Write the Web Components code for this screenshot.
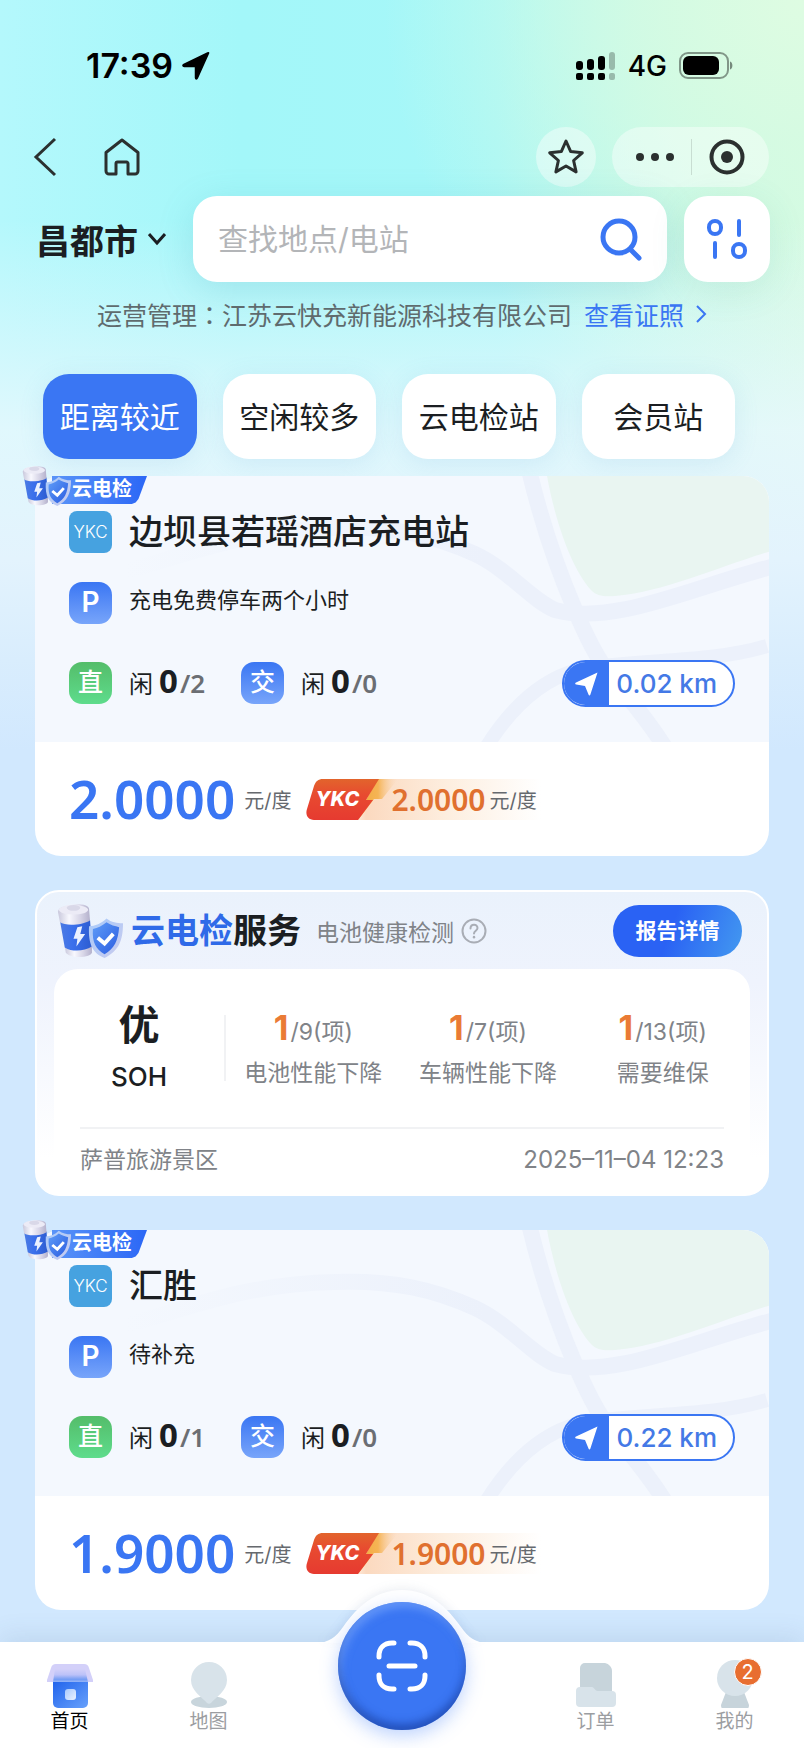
<!DOCTYPE html>
<html lang="zh-CN">
<head>
<meta charset="utf-8">
<meta name="viewport" content="width=device-width, initial-scale=1">
<title>云快充</title>
<style>
    * {
        box-sizing: border-box;
    }
    body {
        margin: 0;
        min-height: 100vh;
        display: flex;
        flex-direction: column;
        font-family: "Inter", "Noto Sans CJK SC", sans-serif;
        color: #1b1e22;
        --blue: #3a76f3;
        --orange: #e0702f;
        background-color: #d1e8fe;
        background-image:
            linear-gradient(180deg, rgba(226, 244, 253, 0) 220px, rgba(232, 248, 253, 0.85) 430px, #e3f3fd 560px, #d9edfd 660px, #d1e8fe 750px),
            radial-gradient(circle at 100% 0, rgba(222, 252, 226, 1) 0, rgba(214, 251, 226, 0.9) 140px, rgba(205, 250, 228, 0) 420px),
            linear-gradient(90deg, #b4f8fc 0, #a3f7f9 30%, #a6f7f8 62%, #d2fae2 100%);
        background-size: 100% 760px;
        background-repeat: no-repeat;
    }
    header {
        display: flex;
        flex-direction: column;
    }
    main {
        flex: 1;
        display: flex;
        flex-direction: column;
        gap: 34px;
        padding: 0 35px 32px;
    }
    tab-bar {
        position: sticky;
        bottom: 0;
    }
</style>
</head>
<body>
<header>
    <status-bar time="17:39" network="4G"></status-bar>
    <nav-bar></nav-bar>
    <search-bar city="昌都市" placeholder="查找地点/电站"></search-bar>
    <operator-line><span slot="label">运营管理</span>江苏云快充新能源科技有限公司<span slot="link">查看证照</span></operator-line>
    <filter-tabs items="距离较近,空闲较多,云电检站,会员站"></filter-tabs>
</header>
<main>
    <station-card distance="0.02 km" dc-free="0" dc-total="2" ac-free="0" ac-total="0" price="2.0000" member-price="2.0000">
        边坝县若瑶酒店充电站
        <span slot="parking">充电免费停车两个小时</span>
    </station-card>
    <check-report grade="优" place="萨普旅游景区" time="2025–11–04 12:23">
        <check-item slot="items" count="1" total="9">电池性能下降</check-item>
        <check-item slot="items" count="1" total="7">车辆性能下降</check-item>
        <check-item slot="items" count="1" total="13">需要维保</check-item>
    </check-report>
    <station-card distance="0.22 km" dc-free="0" dc-total="1" ac-free="0" ac-total="0" price="1.9000" member-price="1.9000">
        汇胜
        <span slot="parking">待补充</span>
    </station-card>
</main>
<tab-bar></tab-bar>

<script>
const reset = `
    *, *::before, *::after { box-sizing: border-box; }
    button { all: unset; box-sizing: border-box; cursor: pointer; }
    a { color: inherit; text-decoration: none; }
    svg { display: block; }
    h2, p { margin: 0; }
`;

class StatusBar extends HTMLElement {
    constructor() {
        super();
        this.attachShadow({ mode: "open" });
        this.shadowRoot.innerHTML = `
            <style>
                ${reset}
                :host {
                    display: flex;
                    justify-content: space-between;
                    align-items: center;
                    height: 127px;
                    padding: 4px 70px 0 86px;
                    color: #000;
                }
                div {
                    display: flex;
                    align-items: center;
                    gap: 9px;
                }
                .time {
                    font-size: 34px;
                    font-weight: 600;
                }
                .net {
                    font-size: 28px;
                    font-weight: 500;
                    margin: 0 3px;
                }
            </style>
            <div>
                <span class="time">${this.getAttribute("time")}</span>
                <svg width="28" height="28" viewBox="0 0 28 28"><path d="M26.500 1.200 15.400 26c-.6 1.400-1.900 1.100-1.900-.3V15.200c0-.5-.3-.8-.8-.8H2.200c-1.500 0-1.700-1.300-.4-1.900L25.600 1c.7-.3 1.200-.3.9.2z" stroke="#000" stroke-width="1.500" stroke-linejoin="round"/></svg>
            </div>
            <div>
                <svg width="40" height="30" viewBox="0 0 40 30">
                    <g>
                        <rect x="0" y="10" width="7" height="9" rx="3"/>
                        <rect x="11" y="8" width="7" height="11" rx="3"/>
                        <rect x="22" y="5" width="7" height="14" rx="3"/>
                        <rect x="0" y="22" width="7" height="7" rx="2"/>
                        <rect x="11" y="22" width="7" height="7" rx="2"/>
                        <rect x="22" y="22" width="7" height="7" rx="2"/>
                    </g>
                    <g opacity=".25">
                        <rect x="33" y="1" width="6" height="18" rx="3"/>
                        <rect x="33" y="22" width="6" height="7" rx="2"/>
                    </g>
                </svg>
                <span class="net">${this.getAttribute("network")}</span>
                <svg width="55" height="27" viewBox="0 0 55 27">
                    <rect x="1" y="1" width="48" height="25" rx="8" fill="none" stroke="#000" stroke-opacity=".4" stroke-width="2"/>
                    <rect x="4" y="4" width="36" height="19" rx="6"/>
                    <path d="M51 9.500c3.200 1 3.200 7 0 8z" fill-opacity=".45"/>
                </svg>
            </div>
        `;
    }
}

class NavBar extends HTMLElement {
    constructor() {
        super();
        this.attachShadow({ mode: "open" });
        this.shadowRoot.innerHTML = `
            <style>
                ${reset}
                :host {
                    display: flex;
                    justify-content: space-between;
                    align-items: center;
                    height: 60px;
                    padding: 0 35px 0 33px;
                }
                div, button {
                    display: flex;
                    align-items: center;
                }
                .left {
                    gap: 46px;
                }
                .right {
                    gap: 16px;
                }
                .star, .capsule {
                    height: 60px;
                    border-radius: 30px;
                    background: rgba(255, 255, 255, 0.42);
                }
                .star {
                    width: 60px;
                    justify-content: center;
                }
                .capsule {
                    padding: 0 24px;
                    gap: 17px;
                }
                i {
                    width: 1px;
                    height: 36px;
                    background: rgba(0, 0, 0, 0.12);
                }
            </style>
            <div class="left">
                <button aria-label="返回"><svg width="24" height="40" viewBox="0 0 24 40" fill="none" stroke="#2b302f" stroke-width="3"><path d="M22 2 3 20l19 18"/></svg></button>
                <button aria-label="首页"><svg width="38" height="38" viewBox="0 0 38 38" fill="none" stroke="#2b302f" stroke-width="3" stroke-linejoin="round"><path d="M3 14.500 19 2l16 12.500V33a3 3 0 0 1-3 3h-7V25.500a1.500 1.500 0 0 0-1.500-1.500h-9a1.500 1.500 0 0 0-1.500 1.500V36H6a3 3 0 0 1-3-3z"/></svg></button>
            </div>
            <div class="right">
                <button class="star" aria-label="收藏"><svg width="38" height="38" viewBox="0 0 38 38" fill="none" stroke="#2b302f" stroke-width="3" stroke-linejoin="round"><path d="m19 3 4.700 10.600 11.600 1.200-8.700 7.700 2.500 11.400L19 28l-10.100 5.900 2.500-11.400-8.700-7.700 11.600-1.200z"/></svg></button>
                <div class="capsule">
                    <button aria-label="更多"><svg width="38" height="36" viewBox="0 0 38 36" fill="#2b302f"><circle cx="4" cy="18" r="4"/><circle cx="19" cy="18" r="4"/><circle cx="34" cy="18" r="4"/></svg></button>
                    <i></i>
                    <button aria-label="关闭"><svg width="36" height="36" viewBox="0 0 36 36"><circle cx="18" cy="18" r="15.500" fill="none" stroke="#2b302f" stroke-width="4"/><circle cx="18" cy="18" r="6" fill="#2b302f"/></svg></button>
                </div>
            </div>
        `;
    }
}

class SearchBar extends HTMLElement {
    constructor() {
        super();
        this.attachShadow({ mode: "open" });
        this.shadowRoot.innerHTML = `
            <style>
                ${reset}
                :host {
                    display: flex;
                    align-items: center;
                    padding: 9px 34px 0 36px;
                }
                .city {
                    flex: none;
                    display: flex;
                    align-items: center;
                    gap: 10px;
                    width: 157px;
                    font-size: 34px;
                    font-weight: 700;
                    white-space: nowrap;
                }
                form {
                    flex: 1;
                    min-width: 0;
                    display: flex;
                    align-items: center;
                    height: 86px;
                    margin-right: 17px;
                    padding: 0 24px 0 25px;
                    border-radius: 24px;
                    background: #fff;
                    box-shadow: 0 8px 36px rgba(60, 150, 170, 0.18);
                }
                input {
                    flex: 1;
                    min-width: 0;
                    border: 0;
                    padding: 0;
                    outline: 0;
                    background: none;
                    font: 30px "Inter", "Noto Sans CJK SC", sans-serif;
                }
                input::placeholder {
                    color: #b3b5b8;
                }
                .filter {
                    flex: none;
                    display: grid;
                    place-items: center;
                    width: 86px;
                    height: 86px;
                    border-radius: 24px;
                    background: #fff;
                    box-shadow: 0 8px 36px rgba(60, 150, 130, 0.12);
                }
            </style>
            <button class="city">${this.getAttribute("city")}<svg width="18" height="14" viewBox="0 0 18 14" fill="none" stroke="#1b1e22" stroke-width="3"><path d="m1 2 8 9 8-9"/></svg></button>
            <form>
                <input type="text" aria-label="搜索" placeholder="${this.getAttribute("placeholder")}">
                <button type="button" aria-label="搜索"><svg width="44" height="44" viewBox="0 0 44 44" fill="none" stroke="#3a76f3" stroke-width="5" stroke-linecap="round"><circle cx="20" cy="20" r="16"/><path d="m32 33 8 8"/></svg></button>
            </form>
            <button class="filter" aria-label="筛选"><svg width="42" height="42" viewBox="0 0 42 42" fill="none" stroke="#3a76f3" stroke-width="4" stroke-linecap="round">
                <rect x="3" y="3" width="12" height="13" rx="6"/>
                <path d="M33 3v14"/>
                <path d="M9 25v14"/>
                <rect x="27" y="26" width="12" height="13" rx="6"/>
            </svg></button>
        `;
    }
}

class OperatorLine extends HTMLElement {
    constructor() {
        super();
        this.attachShadow({ mode: "open" });
        this.shadowRoot.innerHTML = `
            <style>
                ${reset}
                :host {
                    display: flex;
                    justify-content: center;
                    align-items: center;
                    height: 64px;
                    font-size: 25px;
                    color: #5f6b6e;
                    white-space: nowrap;
                }
                .colon {
                    font-family: "Noto Sans CJK TC", sans-serif;
                }
                a {
                    display: flex;
                    align-items: center;
                    gap: 12px;
                    margin-left: 12px;
                    color: var(--blue);
                }
            </style>
            <span><slot name="label"></slot><span class="colon" lang="zh-TW">：</span><slot></slot></span>
            <a href="#license"><slot name="link"></slot><svg width="11" height="18" viewBox="0 0 11 18" fill="none" stroke="#3a76f3" stroke-width="2"><path d="m1 1 8 8-8 8"/></svg></a>
        `;
    }
}

class FilterTabs extends HTMLElement {
    constructor() {
        super();
        this.attachShadow({ mode: "open" });
        const items = this.getAttribute("items").split(",");
        this.shadowRoot.innerHTML = `
            <style>
                ${reset}
                :host {
                    display: grid;
                    grid-template-columns: repeat(4, 1fr);
                    gap: 26px;
                    padding: 28px 69px 17px 43px;
                }
                button {
                    height: 85px;
                    border-radius: 26px;
                    background: #fff;
                    font-size: 30px;
                    line-height: 82px;
                    text-align: center;
                    box-shadow: 0 4px 24px rgba(90, 160, 210, 0.14);
                }
                button[aria-pressed="true"] {
                    background: var(--blue);
                    color: #fff;
                }
            </style>
            ${items.map((item, i) => `<button aria-pressed="${i === 0}">${item}</button>`).join("")}
        `;
    }
}

/* battery with a shield in front of it */
class CheckMascot extends HTMLElement {
    constructor() {
        super();
        this.attachShadow({ mode: "open" });
        this.shadowRoot.innerHTML = `
            <style>
                :host { display: block; }
                svg { display: block; width: 100%; height: 100%; }
            </style>
            <svg viewBox="0 0 68 56" preserveAspectRatio="none">
                <defs>
                    <linearGradient id="metal"><stop offset="0" stop-color="#c9c8dc"/><stop offset=".35" stop-color="#f8f8fe"/><stop offset=".7" stop-color="#d6d4e6"/><stop offset="1" stop-color="#b4b1cc"/></linearGradient>
                    <linearGradient id="cell"><stop offset="0" stop-color="#4c7be2"/><stop offset=".4" stop-color="#3b70ec"/><stop offset="1" stop-color="#2c5cd0"/></linearGradient>
                    <linearGradient id="shield" x2="1" y2="1"><stop offset="0" stop-color="#5f9df8"/><stop offset="1" stop-color="#2a5be0"/></linearGradient>
                    <linearGradient id="rim" x2="1" y2="1"><stop offset="0" stop-color="#a9cbfa"/><stop offset="1" stop-color="#c9cbee"/></linearGradient>
                </defs>
                <path d="M8 44h28v6c0 6-24 7-27 0z" fill="url(#metal)"/>
                <path d="M3 17c10 5 23 4 31-1l2 28c-8 5-20 6-28 1z" fill="url(#cell)"/>
                <path d="M1 8c0-8 31-11 32-3l1 12C26 22 9 23 3 19z" fill="url(#metal)"/>
                <ellipse cx="17" cy="6" rx="15" ry="5" fill="#ecebf6"/>
                <ellipse cx="17" cy="4" rx="7" ry="3" fill="#d9d8e8"/>
                <path d="m21 24-4 12h4l-1 8 9-13h-5l2-8z" fill="#eaf1ff"/>
                <path d="M51 15c5 4 11 5 17 5 0 19-5 29-19 36-12-5-17-14-16-33 6 0 13-3 18-8z" fill="url(#rim)"/>
                <path d="M51 19c4 3 9 4 13 5-1 14-5 22-15 28-9-5-13-12-12-26 5-1 9-3 14-7z" fill="url(#shield)"/>
                <path d="m42 35 7 6 9-10" fill="none" stroke="#fff" stroke-width="4"/>
            </svg>
        `;
    }
}

class StationCard extends HTMLElement {
    constructor() {
        super();
        this.attachShadow({ mode: "open" });
        const attr = (name) => this.getAttribute(name);
        this.shadowRoot.innerHTML = `
            <style>
                ${reset}
                :host {
                    display: block;
                    position: relative;
                    border-radius: 26px;
                    background: #fff;
                }
                .badge {
                    position: absolute;
                    left: -13px;
                    top: -10px;
                    display: flex;
                    z-index: 1;
                }
                .badge check-mascot {
                    position: absolute;
                    left: 0;
                    top: 0;
                    width: 49px;
                    height: 40px;
                }
                .badge span {
                    margin: 10px 0 0 30px;
                    padding: 0 15px 0 20px;
                    height: 28px;
                    line-height: 27px;
                    font-size: 20px;
                    font-weight: 700;
                    color: #fff;
                    background: linear-gradient(90deg, #5a94f8, #2b67f6);
                    clip-path: polygon(0 0, 100% 0, 91% 82%, 88% 95%, 84% 100%, 0 100%);
                }
                .info {
                    position: relative;
                    overflow: hidden;
                    border-radius: 26px 26px 0 0;
                    padding: 35px 34px 38px;
                    background: #f4f8fe;
                }
                .map {
                    position: absolute;
                    inset: 0;
                    width: 100%;
                    height: 100%;
                }
                .row {
                    position: relative;
                    display: flex;
                    align-items: center;
                    height: 42px;
                }
                .parking {
                    align-items: flex-start;
                    margin: 29px 0 38px;
                    font-size: 22px;
                    line-height: 36px;
                }
                .icon {
                    flex: none;
                    width: 43px;
                    height: 42px;
                    margin-right: 17px;
                    border-radius: 13px;
                    line-height: 41px;
                    text-align: center;
                    font-size: 25px;
                    font-weight: 500;
                    color: #fff;
                    background: linear-gradient(#3a76f3, #78a5fa);
                }
                .logo {
                    border-radius: 8px;
                    background: #46a2e0;
                    font: 300 17px/42px "Inter", sans-serif;
                }
                .p {
                    font-size: 28px;
                    font-weight: 600;
                }
                .dc {
                    background: linear-gradient(#54bd6a, #5edc8c);
                }
                h2 {
                    font-size: 34px;
                    font-weight: 500;
                    line-height: 42px;
                }
                .spare {
                    display: flex;
                    align-items: center;
                    width: 172px;
                    font-size: 24px;
                }
                .spare p {
                    display: flex;
                    align-items: baseline;
                    line-height: 42px;
                }
                .spare b {
                    margin: 0 2px 0 6px;
                    font: 700 33px/42px "Noto Sans", sans-serif;
                }
                .spare small {
                    font: 600 26px/42px "Noto Sans", sans-serif;
                    color: #6b6e73;
                }
                .distance {
                    display: flex;
                    align-items: center;
                    height: 47px;
                    margin-left: auto;
                    overflow: hidden;
                    border: 2px solid var(--blue);
                    border-radius: 24px;
                    background: #fff;
                    color: #4479e6;
                    font-size: 26px;
                    font-weight: 500;
                }
                .distance svg {
                    background: var(--blue);
                }
                .distance span {
                    padding: 0 16px 0 7px;
                }
                .price {
                    display: flex;
                    align-items: center;
                    height: 114px;
                    padding: 0 34px;
                    font-size: 20px;
                    color: #66696e;
                }
                .price strong {
                    margin-right: 9px;
                    font: 600 53px/60px "Noto Sans", sans-serif;
                    color: var(--blue);
                }
                .member {
                    display: flex;
                    align-items: center;
                    height: 41px;
                    margin-left: 15px;
                    padding-right: 4px;
                    background: linear-gradient(90deg, transparent 40px, #fbd9bf 60px, #fdeedf 60%, #fff);
                }
                .brand {
                    position: relative;
                    width: 85px;
                    padding-left: 9px;
                    color: #fff;
                    font: italic 800 20px/41px "Inter", sans-serif;
                }
                .brand svg {
                    position: absolute;
                    left: 0;
                    top: 0;
                }
                .brand span {
                    position: relative;
                }
                .member b {
                    margin-right: 4px;
                    font: 600 30px/41px "Noto Sans", sans-serif;
                    color: var(--orange);
                }
            </style>
            <div class="badge"><span>云电检</span><check-mascot></check-mascot></div>
            <div class="info">
                <svg class="map" viewBox="0 0 734 266" preserveAspectRatio="xMaxYMid slice" fill="none" stroke="#ecf1fb" stroke-width="16">
                    <defs><linearGradient id="fade" gradientUnits="userSpaceOnUse" x1="90" x2="450" y1="0" y2="0"><stop offset="0" stop-color="#ecf1fb" stop-opacity="0"/><stop offset="1" stop-color="#ecf1fb"/></linearGradient></defs>
                    <path d="M512 0c8 44 24 92 44 114 5 6 14 7 24 6 50-4 110-32 160-46V0z" fill="#e9f5f1" stroke="none"/>
                    <path d="M495-2c12 50 28 96 45 136 12 28 20 44 30 58 20 26 42 50 59 78"/>
                    <path d="M80 98c60-14 120-44 220-46 60-2 100 8 140 26 34 16 56 46 80 56 60 16 140-24 220-44" stroke="url(#fade)"/>
                    <path d="M452 270c24-38 54-66 90-76 60-12 130-6 190-24" stroke-width="14"/>
                </svg>
                <div class="row"><span class="icon logo">YKC</span><h2><slot></slot></h2></div>
                <div class="row parking"><span class="icon p">P</span><slot name="parking"></slot></div>
                <div class="row">
                    <div class="spare"><span class="icon dc">直</span><p>闲<b>${attr("dc-free")}</b><small>/${attr("dc-total")}</small></p></div>
                    <div class="spare"><span class="icon">交</span><p>闲<b>${attr("ac-free")}</b><small>/${attr("ac-total")}</small></p></div>
                    <button class="distance">
                        <svg width="45" height="43" viewBox="0 0 45 43"><path d="M33.500 10.500 12 20.500c-1.200.6-1 1.800.2 2l8.800 1.500 3.500 8.500c.5 1.200 1.500 1.200 1.900 0z" fill="#fff"/></svg>
                        <span>${attr("distance")}</span>
                    </button>
                </div>
            </div>
            <div class="price">
                <strong>${attr("price")}</strong>元/度
                <div class="member">
                    <div class="brand">
                        <svg width="92" height="41" viewBox="0 0 92 41">
                            <defs>
                                <linearGradient id="red" x2="0" y2="1"><stop offset="0" stop-color="#e2642c"/><stop offset=".4" stop-color="#e84a30"/><stop offset="1" stop-color="#e63a30"/></linearGradient>
                                <linearGradient id="bolt"><stop offset="0" stop-color="#f2a93c"/><stop offset=".5" stop-color="#f5b455"/><stop offset="1" stop-color="#fbd9bf" stop-opacity="0"/></linearGradient>
                            </defs>
                            <path d="M72 0h20L76 20h-8L52 41l8-20z" fill="url(#bolt)"/>
                            <path d="M17 0h56L60 21h7L52 41H8c-6 0-9-5-7-11L8 7c2-5 4-7 9-7z" fill="url(#red)"/>
                        </svg>
                        <span>YKC</span>
                    </div>
                    <b>${attr("member-price")}</b>元/度
                </div>
            </div>
        `;
    }
}

class CheckItem extends HTMLElement {
    constructor() {
        super();
        this.attachShadow({ mode: "open" });
        this.shadowRoot.innerHTML = `
            <style>
                ${reset}
                :host {
                    display: block;
                    text-align: center;
                    font-size: 23px;
                    line-height: 36px;
                    color: #808388;
                    white-space: nowrap;
                }
                p {
                    line-height: 46px;
                }
                b {
                    margin-right: 2px;
                    font-size: 34px;
                    font-weight: 700;
                    color: #ea7b35;
                }
            </style>
            <p><b>${this.getAttribute("count")}</b>/${this.getAttribute("total")}(项)</p>
            <slot></slot>
        `;
    }
}

class CheckReport extends HTMLElement {
    constructor() {
        super();
        this.attachShadow({ mode: "open" });
        this.shadowRoot.innerHTML = `
            <style>
                ${reset}
                :host {
                    display: block;
                    padding: 0 17px;
                    border: 2px solid #fff;
                    border-radius: 24px;
                    background: linear-gradient(#eaf2fc, #eff3fd 30%, #fff 88%);
                }
                .head {
                    display: flex;
                    align-items: center;
                    height: 77px;
                    padding: 0 8px 0 3px;
                }
                check-mascot {
                    width: 66px;
                    height: 54px;
                    margin-right: 8px;
                }
                h2 {
                    font-size: 34px;
                    font-weight: 700;
                    line-height: 48px;
                }
                em {
                    font-style: normal;
                    color: #2f6ae8;
                }
                .sub {
                    margin: 0 7px 0 15px;
                    font-size: 23px;
                    color: #808388;
                }
                .detail {
                    margin-left: auto;
                    width: 129px;
                    height: 52px;
                    border-radius: 26px;
                    background: linear-gradient(110deg, #2a62f4 45%, #4399f0);
                    color: #fff;
                    font-size: 21px;
                    font-weight: 700;
                    line-height: 50px;
                    text-align: center;
                }
                .body {
                    border-radius: 24px 24px 0 0;
                    background: #fff;
                }
                .grid {
                    display: grid;
                    grid-template-columns: 170px 2px repeat(3, 1fr);
                    align-items: center;
                    height: 158px;
                }
                .grade {
                    padding-top: 4px;
                    text-align: center;
                    font-size: 41px;
                    font-weight: 700;
                    line-height: 54px;
                }
                .grade small {
                    display: block;
                    font-size: 26px;
                    font-weight: 500;
                    line-height: 50px;
                }
                i {
                    height: 66px;
                    background: #f1f2f4;
                }
                .foot {
                    display: flex;
                    justify-content: space-between;
                    margin: 0 26px;
                    border-top: 2px solid #f1f2f4;
                    padding-bottom: 3px;
                    font-size: 23px;
                    line-height: 62px;
                    color: #808388;
                }
                time {
                    font-size: 24px;
                }
            </style>
            <div class="head">
                <check-mascot></check-mascot>
                <h2><em>云电检</em>服务</h2>
                <span class="sub">电池健康检测</span>
                <button aria-label="说明"><svg width="26" height="26" viewBox="0 0 26 26" fill="none" stroke="#a9adb5" stroke-width="2" stroke-linecap="round"><circle cx="13" cy="13" r="11.500"/><path d="M9.500 10.500c0-5 7-5 7-.5 0 2.600-3.500 2.800-3.500 5.500"/><path d="M13 19v.2" stroke-width="2.500"/></svg></button>
                <button class="detail">报告详情</button>
            </div>
            <div class="body">
                <div class="grid">
                    <div class="grade">${this.getAttribute("grade")}<small>SOH</small></div>
                    <i></i>
                    <slot name="items"></slot>
                </div>
                <div class="foot"><span>${this.getAttribute("place")}</span><time>${this.getAttribute("time")}</time></div>
            </div>
        `;
    }
}

class TabBar extends HTMLElement {
    constructor() {
        super();
        this.attachShadow({ mode: "open" });
        this.shadowRoot.innerHTML = `
            <style>
                ${reset}
                :host {
                    display: block;
                    z-index: 2;
                    background: #fff;
                    box-shadow: 0 -6px 24px rgba(60, 90, 130, 0.12);
                }
                nav {
                    position: relative;
                    display: grid;
                    grid-template-columns: 1fr 1fr 248px 1fr 1fr;
                    height: 106px;
                    padding-top: 18px;
                }
                a {
                    display: flex;
                    flex-direction: column;
                    align-items: center;
                    font-size: 19px;
                    line-height: 28px;
                    color: #9b9da1;
                }
                a[aria-current] {
                    color: #000;
                }
                .pic {
                    position: relative;
                }
                .count {
                    position: absolute;
                    left: 17px;
                    top: -2px;
                    width: 28px;
                    height: 28px;
                    border: 1px solid #fff;
                    border-radius: 50%;
                    background: #e86e30;
                    color: #fff;
                    font-size: 20px;
                    line-height: 26px;
                    text-align: center;
                }
                .hump {
                    position: absolute;
                    left: calc(50% - 95px);
                    top: -59px;
                    filter: drop-shadow(0 -3px 4px rgba(60, 90, 130, 0.08));
                }
                .scan {
                    position: absolute;
                    left: calc(50% - 64px);
                    top: -40px;
                    display: grid;
                    place-items: center;
                    width: 128px;
                    height: 128px;
                    border-radius: 50%;
                    background: var(--blue);
                    box-shadow: inset 0 -6px 8px rgba(16, 50, 140, 0.55), inset 3px 5px 8px rgba(130, 175, 255, 0.6), 0 6px 18px rgba(70, 130, 250, 0.35);
                }
            </style>
            <nav>
                <a href="#home" aria-current="page">
                    <svg width="46" height="48" viewBox="0 0 46 48">
                        <defs>
                            <linearGradient id="shop" x2="1" y2="1"><stop offset="0" stop-color="#1f62ec"/><stop offset="1" stop-color="#68a1fb"/></linearGradient>
                            <linearGradient id="roof" x2="0" y2="1"><stop offset="0" stop-color="#d3d0f9"/><stop offset=".45" stop-color="#b9c0f8"/><stop offset=".8" stop-color="#6a97f3"/><stop offset="1" stop-color="#8fb2f7"/></linearGradient>
                            <linearGradient id="win" x2="1" y2="1"><stop offset="0" stop-color="#a9c9fd"/><stop offset="1" stop-color="#eaf2ff"/></linearGradient>
                        </defs>
                        <path d="M6 20h35v23a5 5 0 0 1-5 5H11a5 5 0 0 1-5-5z" fill="url(#shop)"/>
                        <path d="M9 4h28c3 0 4 1 5 4l4 12c1 2 0 2-1 2H1c-1 0-2 0-1-2L4 8c1-3 2-4 5-4z" fill="#d3d0f9"/>
                        <path d="M8 9h30l3 13H6z" fill="url(#roof)" opacity=".9"/>
                        <rect x="18" y="29" width="11" height="11" rx="3" fill="url(#win)"/>
                    </svg>
                    首页
                </a>
                <a href="#map">
                    <svg width="36" height="48" viewBox="0 0 36 48">
                        <ellipse cx="18" cy="42" rx="18" ry="6" fill="#c8d5dc"/>
                        <path d="M18 2a18 18 0 0 1 18 18c0 11-11 17-16 23-1 1-3 1-4 0C11 37 0 31 0 20A18 18 0 0 1 18 2z" fill="#d8e3ea"/>
                    </svg>
                    地图
                </a>
                <span></span>
                <a href="#orders">
                    <svg width="40" height="48" viewBox="0 0 40 48">
                        <path d="M9 3h20c4 1 7 4 7 8v23H4V8a5 5 0 0 1 5-5z" fill="#c7d4db"/>
                        <path d="M4 27h12c2 0 3 4 6 4h14a4 4 0 0 1 4 4v8a4 4 0 0 1-4 4H4a4 4 0 0 1-4-4V31a4 4 0 0 1 4-4z" fill="#d8e3ea"/>
                    </svg>
                    订单
                </a>
                <a href="#mine">
                    <span class="pic">
                        <svg width="36" height="48" viewBox="0 0 36 48">
                            <path d="M9 32h18l5 13c0 3-1 4-4 4H8c-3 0-4-1-4-4z" fill="#c7d4db"/>
                            <circle cx="18" cy="18" r="18" fill="#d8e3ea"/>
                        </svg>
                        <span class="count">2</span>
                    </span>
                    我的
                </a>
                <svg class="hump" width="190" height="60" viewBox="0 0 190 60" fill="#fff">
                    <path d="M8 60c14 0 21-6 28-16C50 24 68 7 95 7s45 17 59 37c7 10 14 16 28 16z"/>
                </svg>
                <button class="scan" aria-label="扫码"><svg width="52" height="52" viewBox="0 0 52 52" fill="none" stroke="#fff" stroke-width="5" stroke-linecap="round">
                    <path d="M3 17v-1C3 8 8 3 16 3h2"/>
                    <path d="M34 3h2c8 0 13 5 13 13v1"/>
                    <path d="M3 35v1c0 8 5 13 13 13h2"/>
                    <path d="M34 49h2c8 0 13-5 13-13v-1"/>
                    <path d="M13 26h26"/>
                </svg></button>
            </nav>
        `;
    }
}

customElements.define("status-bar", StatusBar);
customElements.define("nav-bar", NavBar);
customElements.define("search-bar", SearchBar);
customElements.define("operator-line", OperatorLine);
customElements.define("filter-tabs", FilterTabs);
customElements.define("check-mascot", CheckMascot);
customElements.define("station-card", StationCard);
customElements.define("check-item", CheckItem);
customElements.define("check-report", CheckReport);
customElements.define("tab-bar", TabBar);
</script>
</body>
</html>
